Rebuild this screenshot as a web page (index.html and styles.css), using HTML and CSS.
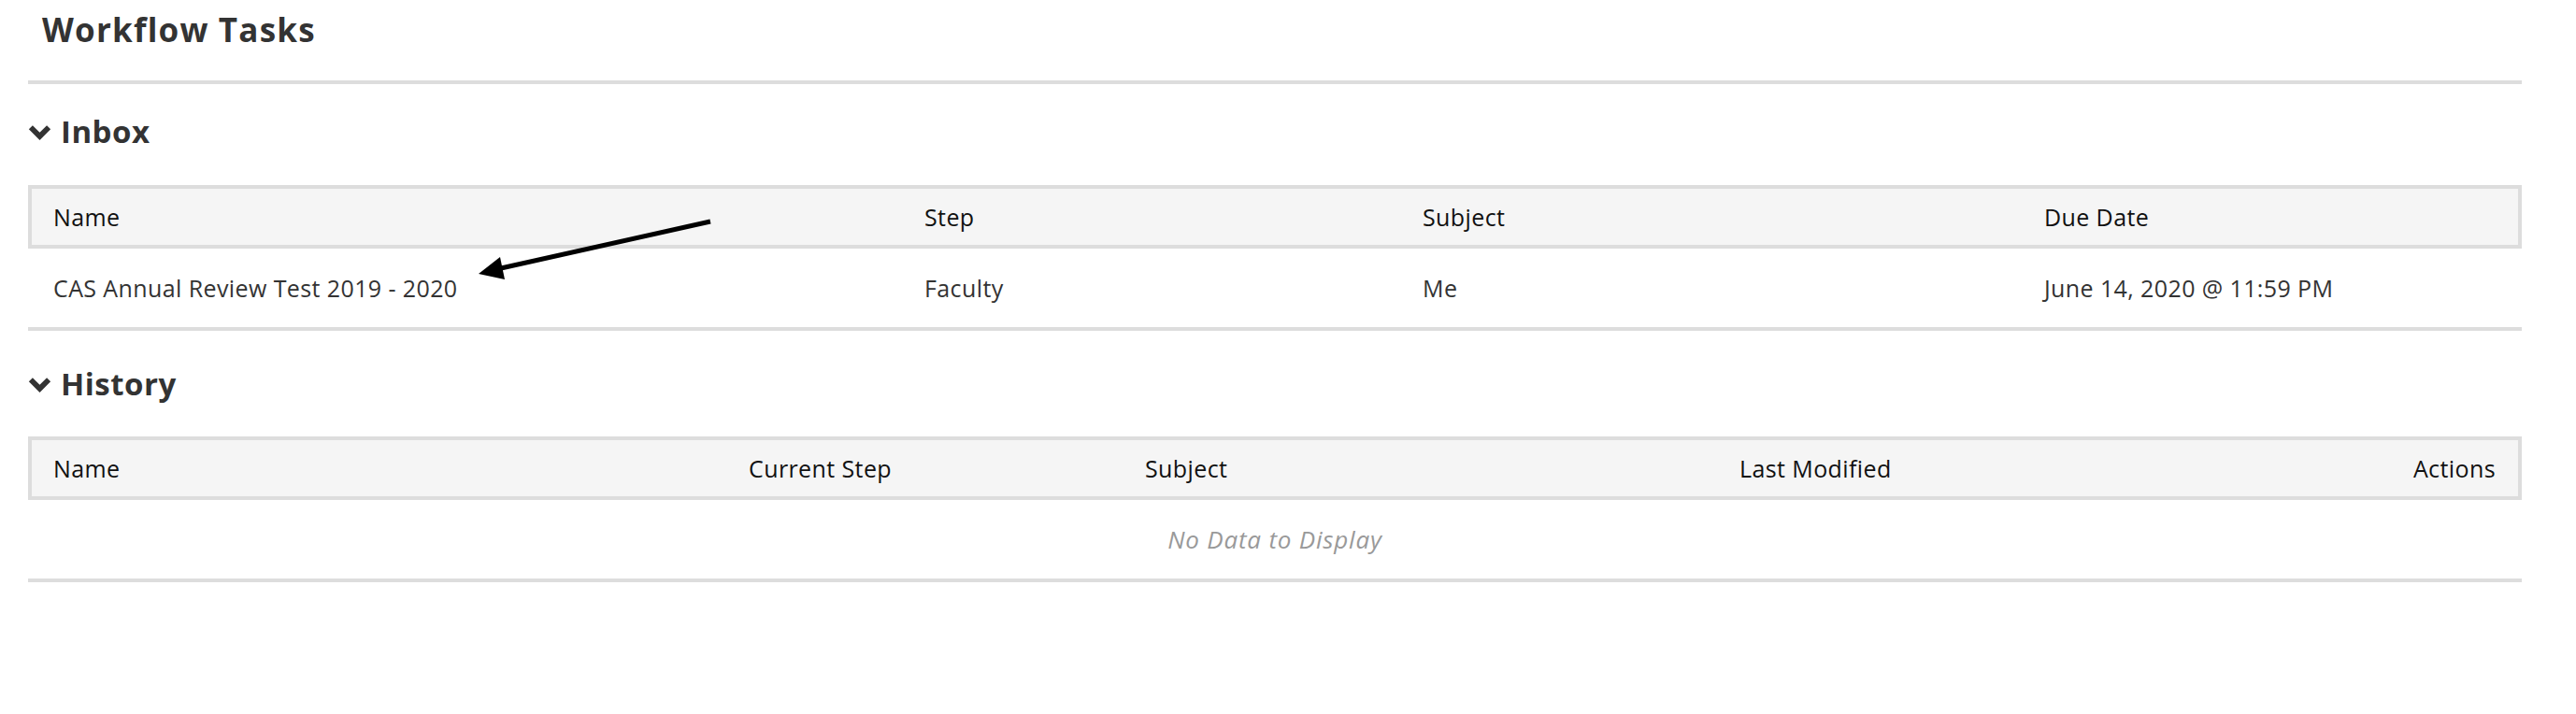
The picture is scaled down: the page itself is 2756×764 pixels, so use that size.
FILE: index.html
```
<!DOCTYPE html>
<html lang="en">
<head>
    <meta charset="UTF-8">
    <title>Workflow Tasks</title>
    <link rel="stylesheet" href="styles.css">
</head>
<body>

    <div class="page">
        <header class="page-header">
            <h1>Workflow Tasks</h1>
        </header>

        <section class="panel">
            <h2 class="panel-title">
                <svg class="chevron" viewBox="0 0 26 17"><polyline points="3,3 13,13 23,3"/></svg>
                Inbox
            </h2>
            <table class="grid">
                <thead>
                    <tr>
                        <th class="col-name">Name</th>
                        <th class="col-step">Step</th>
                        <th class="col-subject">Subject</th>
                        <th class="col-due">Due Date</th>
                    </tr>
                </thead>
                <tbody>
                    <tr>
                        <td>CAS Annual Review Test 2019 - 2020</td>
                        <td>Faculty</td>
                        <td>Me</td>
                        <td>June 14, 2020 @ 11:59 PM</td>
                    </tr>
                </tbody>
            </table>
        </section>

        <section class="panel">
            <h2 class="panel-title">
                <svg class="chevron" viewBox="0 0 26 17"><polyline points="3,3 13,13 23,3"/></svg>
                History
            </h2>
            <table class="grid">
                <thead>
                    <tr>
                        <th class="col-hname">Name</th>
                        <th class="col-current">Current Step</th>
                        <th class="col-hsubject">Subject</th>
                        <th class="col-modified">Last Modified</th>
                        <th class="col-actions">Actions</th>
                    </tr>
                </thead>
                <tbody>
                    <tr>
                        <td class="empty" colspan="5">No Data to Display</td>
                    </tr>
                </tbody>
            </table>
        </section>
    </div>

    <!-- annotation arrow drawn over the table -->
    <svg class="arrow" width="2756" height="764" viewBox="0 0 2756 764">
        <line x1="760" y1="237" x2="536" y2="287"/>
        <polygon points="512,293 540,299 535,275"/>
    </svg>

</body>
</html>
```
FILE: styles.css
```
body {
    font-family: 'Open Sans', 'Noto Sans', sans-serif;
    color: #333;
    background: #fff;
    margin: 0;
    padding: 0;
}

.page {
    width: 2668px;
    margin: 0 30px;
}

.page-header {
    padding: 8px 0 30px 15px;
    border-bottom: 4px solid #ddd;
}

.page-header h1 {
    margin: 0;
    font-size: 35px;
    line-height: 48px;
    font-weight: 700;
    letter-spacing: 1.2px;
}

.panel-title {
    display: flex;
    align-items: center;
    gap: 10px;
    margin: 31px 0 37px;
    font-size: 33px;
    line-height: 40px;
    font-weight: 700;
    letter-spacing: 0.5px;
}

.panel + .panel .panel-title {
    margin-top: 37px;
    margin-bottom: 36px;
}

.chevron {
    width: 25px;
    height: 17px;
    fill: none;
    stroke: #333;
    stroke-width: 6;
}

.grid {
    width: 100%;
    table-layout: fixed;
    border-collapse: separate;
    border-spacing: 0;
    font-size: 25px;
    letter-spacing: 0.4px;
}

.grid th,
.grid td {
    box-sizing: border-box;
    padding: 0 24px;
    text-align: left;
    vertical-align: middle;
    white-space: nowrap;
}

.grid th {
    height: 68px;
    font-weight: 400;
    color: #111;
    background-color: #f5f5f5;
    border-top: 4px solid #ddd;
    border-bottom: 4px solid #ddd;
}

.grid th:first-child {
    border-left: 4px solid #ddd;
    padding-left: 23px;
}

.grid th:last-child {
    border-right: 4px solid #ddd;
}

.grid td {
    height: 88px;
    color: #333;
    border-bottom: 4px solid #ddd;
}

.grid td:first-child {
    padding-left: 27px;
}

.col-name { width: 935px; }
.col-step { width: 533px; }
.col-subject { width: 665px; }
.col-due { width: 535px; }

.col-hname { width: 747px; }
.col-current { width: 424px; }
.col-hsubject { width: 636px; }
.col-modified { width: 563px; }
.col-actions { width: 298px; text-align: right !important; }

.grid td.empty {
    padding: 0;
    text-align: center;
    font-size: 26px;
    letter-spacing: 0.8px;
    font-style: italic;
    color: #999;
}

.arrow {
    position: absolute;
    top: 0;
    left: 0;
    pointer-events: none;
}

.arrow line {
    stroke: #000;
    stroke-width: 5;
}

.arrow polygon {
    fill: #000;
}
```
